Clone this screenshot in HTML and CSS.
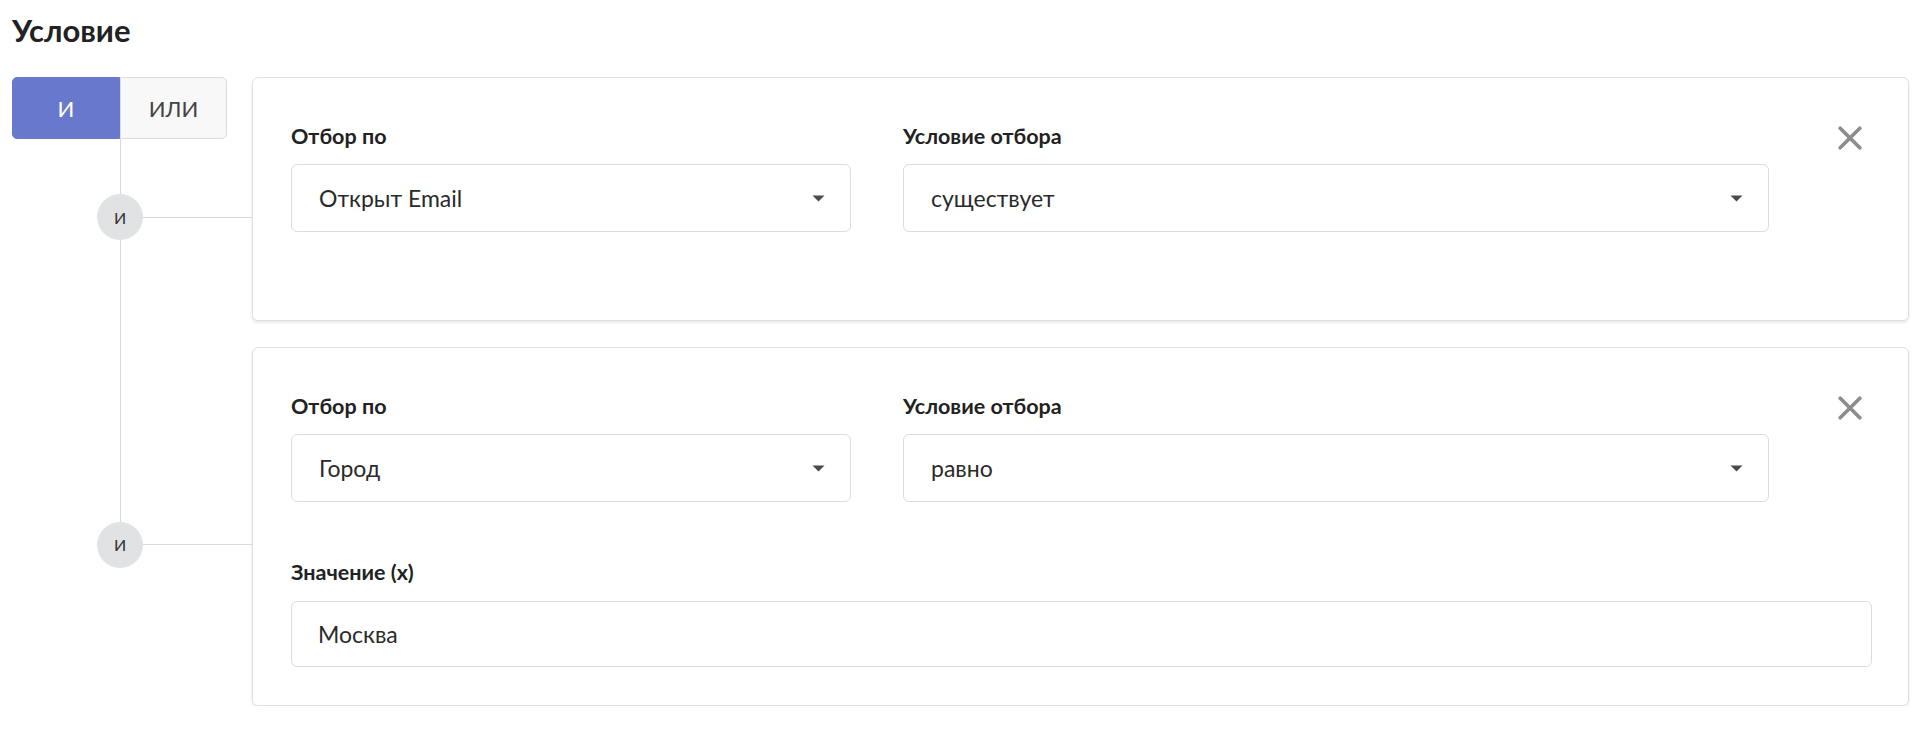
FILE: index.html
```
<!DOCTYPE html>
<html lang="ru">
<head>
<meta charset="utf-8">
<title>Условие</title>
<link rel="stylesheet" href="styles.css">
</head>
<body>
<h1 class="title">Условие</h1>
<div class="builder">
  <div class="mode-toggle">
    <button class="mode mode-active">И</button>
    <button class="mode">ИЛИ</button>
  </div>

  <div class="link link-first"><span class="node">И</span></div>
  <div class="card card-first">
    <div class="fields-row">
      <div class="field field-a">
        <label class="field-label">Отбор по</label>
        <div class="select"><span class="select-value">Открыт Email</span><svg class="caret" width="13" height="7" viewBox="0 0 13 7"><path d="M0.5 0.5 H12.5 L6.5 6.5 Z" fill="#4a4a4a"/></svg></div>
      </div>
      <div class="field field-b">
        <label class="field-label">Условие отбора</label>
        <div class="select"><span class="select-value">существует</span><svg class="caret" width="13" height="7" viewBox="0 0 13 7"><path d="M0.5 0.5 H12.5 L6.5 6.5 Z" fill="#4a4a4a"/></svg></div>
      </div>
      <div class="remove-cell">
        <button class="remove" aria-label="Удалить"><svg width="24" height="24" viewBox="0 0 24 24"><path d="M2.2 2.2 L21.8 21.8 M21.8 2.2 L2.2 21.8" stroke="#8c8c8c" stroke-width="3.6" stroke-linecap="round" fill="none"/></svg></button>
      </div>
    </div>
  </div>

  <div class="link link-last"><span class="node">И</span></div>
  <div class="card card-last">
    <div class="fields-row">
      <div class="field field-a">
        <label class="field-label">Отбор по</label>
        <div class="select"><span class="select-value">Город</span><svg class="caret" width="13" height="7" viewBox="0 0 13 7"><path d="M0.5 0.5 H12.5 L6.5 6.5 Z" fill="#4a4a4a"/></svg></div>
      </div>
      <div class="field field-b">
        <label class="field-label">Условие отбора</label>
        <div class="select"><span class="select-value">равно</span><svg class="caret" width="13" height="7" viewBox="0 0 13 7"><path d="M0.5 0.5 H12.5 L6.5 6.5 Z" fill="#4a4a4a"/></svg></div>
      </div>
      <div class="remove-cell">
        <button class="remove" aria-label="Удалить"><svg width="24" height="24" viewBox="0 0 24 24"><path d="M2.2 2.2 L21.8 21.8 M21.8 2.2 L2.2 21.8" stroke="#8c8c8c" stroke-width="3.6" stroke-linecap="round" fill="none"/></svg></button>
      </div>
    </div>
    <div class="value-group">
      <label class="field-label">Значение (x)</label>
      <div class="text-input">Москва</div>
    </div>
  </div>
</div>
</body>
</html>
```
FILE: styles.css
```
* { box-sizing: border-box; }

body {
  margin: 0;
  padding: 10px 18px 0 12px;
  background: #ffffff;
  font-family: "Lato", "Noto Sans", sans-serif;
  color: #222;
}

.title {
  margin: 0 0 27px 0;
  font-size: 31px;
  line-height: 40px;
  font-weight: 700;
  color: #222;
}

.builder {
  display: grid;
  grid-template-columns: 240px 1fr;
  row-gap: 26px;
}

.mode-toggle {
  grid-row: 1;
  grid-column: 1;
  align-self: start;
  justify-self: start;
  z-index: 2;
  display: flex;
  width: 215px;
  height: 62px;
}

.mode {
  margin: 0;
  font-family: inherit;
  font-size: 22px;
  font-weight: 400;
  display: flex;
  align-items: center;
  justify-content: center;
  background: #f8f8f8;
  color: #444;
  border: 1px solid #dcdcdc;
  border-radius: 0 5px 5px 0;
  flex: 1;
  padding: 0;
}

.mode-active {
  flex: 0 0 108px;
  background: #6878cc;
  border-color: #6878cc;
  color: #fff;
  border-radius: 5px 0 0 5px;
}

.link {
  position: relative;
  display: flex;
  align-items: center;
  padding-top: 36px;
}

.link-first { grid-row: 1; grid-column: 1; }
.link-last { grid-row: 2; grid-column: 1; }

.link::before {
  content: "";
  position: absolute;
  left: 108px;
  top: 0;
  width: 1px;
  background: #dadada;
}

.link-first::before { bottom: -26px; }
.link-last::before { height: calc(50% + 18px); }

.link::after {
  content: "";
  flex: 1;
  height: 1px;
  background: #dadada;
}

.node {
  position: relative;
  z-index: 1;
  flex: 0 0 46px;
  height: 46px;
  margin-left: 85px;
  border-radius: 50%;
  background: #e1e2e4;
  color: #333;
  font-size: 16px;
  display: flex;
  align-items: center;
  justify-content: center;
}

.card {
  grid-column: 2;
  background: #fff;
  border: 1px solid #e0e0e0;
  border-radius: 6px;
  box-shadow: 0 2px 3px rgba(0, 0, 0, 0.09);
  padding: 46px 36px 38px 38px;
}

.card-first { grid-row: 1; }
.card-last { grid-row: 2; }

.fields-row {
  display: flex;
  margin-bottom: 50px;
}

.field-a { flex: 0 0 560px; }
.field-b { flex: 0 0 866px; margin-left: 52px; }

.remove-cell {
  flex: 1;
  display: flex;
  justify-content: flex-end;
  align-items: flex-start;
}

.remove {
  margin: 2px 10px 0 0;
  padding: 0;
  border: 0;
  background: none;
  width: 24px;
  height: 24px;
  display: block;
}

.remove svg { display: block; }

.field-label {
  display: block;
  font-size: 21.5px;
  line-height: 24px;
  font-weight: 700;
  color: #222;
  margin-bottom: 16px;
}

.select,
.text-input {
  display: flex;
  align-items: center;
  justify-content: space-between;
  height: 68px;
  border: 1px solid #dcdcdc;
  border-radius: 6px;
  padding: 0 25px 0 27px;
  font-size: 23px;
  color: #2a2a2a;
  background: #fff;
}

.caret { display: block; flex: none; }

.value-group { padding-top: 8px; }
.value-group .field-label { margin-bottom: 17px; }

.text-input {
  height: 66px;
  padding-left: 26px;
}
```
